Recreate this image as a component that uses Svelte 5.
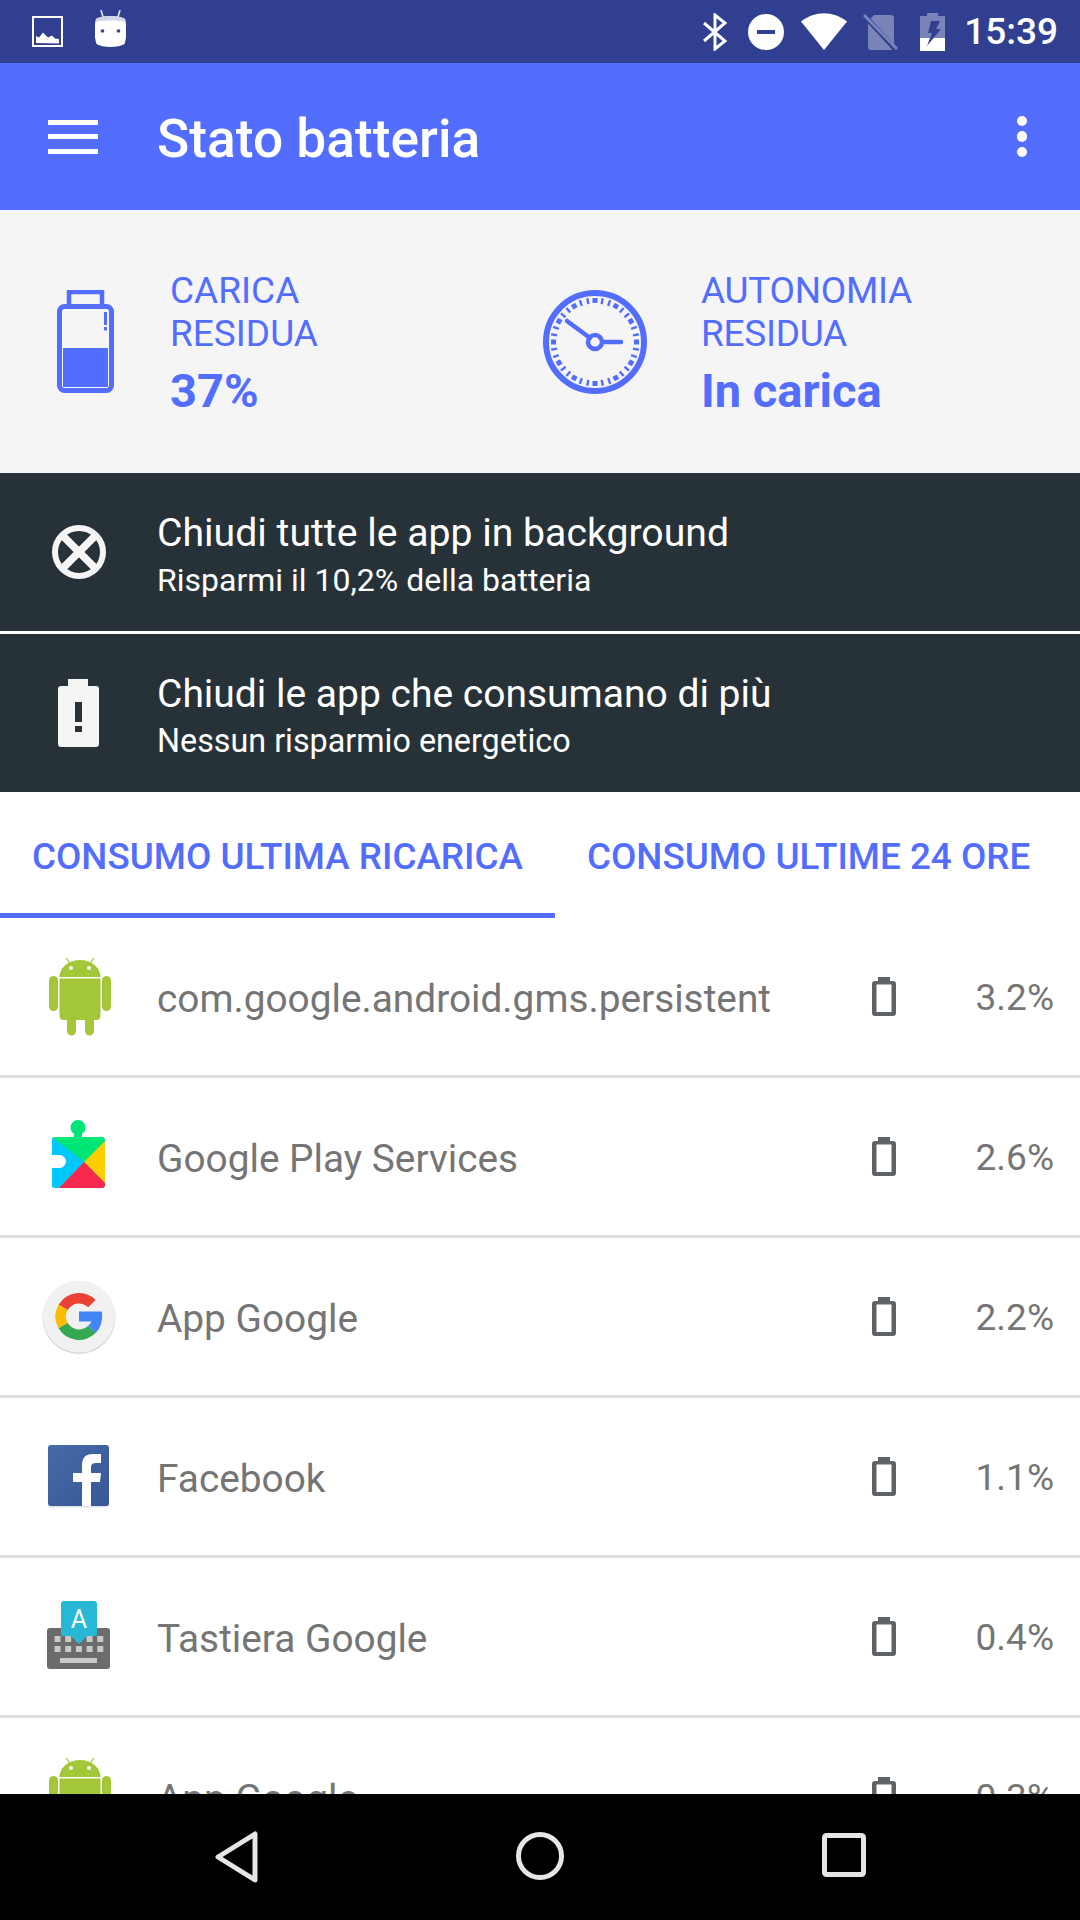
<script>
  const apps = [
    { name: 'com.google.android.gms.persistent', pct: '3.2%', icon: 'android' },
    { name: 'Google Play Services', pct: '2.6%', icon: 'play' },
    { name: 'App Google', pct: '2.2%', icon: 'google' },
    { name: 'Facebook', pct: '1.1%', icon: 'facebook' },
    { name: 'Tastiera Google', pct: '0.4%', icon: 'keyboard' },
    { name: 'App Google', pct: '0.3%', icon: 'android' }
  ];
  const ticks = Array.from({ length: 36 }, (_, i) => i * 10);
</script>

<div class="screen">
  <header class="status">
    <div class="status-left">
      <svg width="31" height="31" viewBox="0 0 31 31"><rect x="1" y="1" width="29" height="29" fill="none" stroke="#fff" stroke-width="2"/><path d="M4 27v-7l3 1.500 4-5 5 5 4-2 3 3 4 .5v4.500z" fill="#fff"/></svg>
      <svg class="robot" width="31" height="37" viewBox="0 0 31 37"><path d="M6 0l2 7M25 0l-2 7" stroke="#e4e6f2" stroke-width="1.600"/><path d="M1 9c6-4 23-4 29 0 2 8 2 17-.5 25-6 4-22 4-28 0C-1 26-1 17 1 9z" fill="#fff"/><path d="M1 9c6-4 23-4 29 0l.5 3c-7-2-23-2-30 0z" fill="#d2d6ea"/><circle cx="7.500" cy="21" r="1.800" fill="#303f8f"/><circle cx="23.500" cy="21" r="1.800" fill="#303f8f"/></svg>
    </div>
    <div class="status-right">
      <svg width="24" height="38" viewBox="0 0 24 38"><path d="M1 10l21 18-10 8V2l10 8L1 28" fill="none" stroke="#fff" stroke-width="3"/></svg>
      <svg class="s-dnd" width="36" height="36" viewBox="0 0 36 36"><circle cx="18" cy="18" r="18" fill="#fff"/><rect x="9" y="16" width="18" height="4" fill="#303f8f"/></svg>
      <svg class="s-wifi" width="46" height="37" viewBox="0 0 46 37"><path d="M0 8.500c14-11 32-11 46 0L23 37z" fill="#fff"/></svg>
      <svg class="s-sim" width="35" height="36" viewBox="0 0 35 36"><path d="M5 7l6-6h17q3 0 3 3v29q0 3-3 3H8q-3 0-3-3z" fill="#7a84b8"/><path d="M0 0l33 36" stroke="#303f8f" stroke-width="5"/><path d="M1 1l33 34" stroke="#7a84b8" stroke-width="3"/></svg>
      <svg class="s-bat" width="25" height="38" viewBox="0 0 25 38"><path d="M7 0h11v3h7v35H0V3h7z" fill="#7a84b8"/><rect y="25" width="25" height="13" fill="#fff"/><path d="M11 8h9l-4 8h5L7 33l5-13H8z" fill="#303f8f"/></svg>
      <span class="clock">15:39</span>
    </div>
  </header>

  <div class="appbar">
    <div class="menu"><i></i><i></i><i></i></div>
    <h1>Stato batteria</h1>
    <div class="more"><i></i><i></i><i></i></div>
  </div>

  <section class="summary">
    <div class="stat stat-a">
      <svg class="stat-icon" width="57" height="103" viewBox="0 0 57 103">
        <path d="M12 15V2h33v13" fill="none" stroke="#536dfe" stroke-width="4.500"/>
        <rect x="2.500" y="16.500" width="52" height="84" rx="5" fill="none" stroke="#536dfe" stroke-width="5"/>
        <rect x="6" y="58" width="45" height="39" fill="#536dfe"/>
        <rect x="47" y="22" width="3" height="13" fill="#536dfe"/>
        <rect x="47" y="37" width="3" height="3.500" fill="#536dfe"/>
      </svg>
      <div class="stat-text">
        <div class="label">CARICA<br />RESIDUA</div>
        <div class="value">37%</div>
      </div>
    </div>
    <div class="stat stat-b">
      <svg class="stat-icon" width="104" height="104" viewBox="0 0 104 104">
        <circle cx="52" cy="52" r="49" fill="none" stroke="#536dfe" stroke-width="6"/>
        {#each ticks as a}
          {#if a % 30 === 0}
            <rect x="49.500" y="8" width="5" height="5" fill="#536dfe" transform="rotate({a} 52 52)" />
          {:else}
            <rect x="50.800" y="7.500" width="2.400" height="6" fill="#536dfe" transform="rotate({a} 52 52)" />
          {/if}
        {/each}
        <path d="M47 48L24 31M60 52h18" stroke="#536dfe" stroke-width="4.500" stroke-linecap="round" />
        <circle cx="52" cy="52" r="7" fill="none" stroke="#536dfe" stroke-width="4.500"/>
      </svg>
      <div class="stat-text">
        <div class="label">AUTONOMIA<br />RESIDUA</div>
        <div class="value">In carica</div>
      </div>
    </div>
  </section>

  <div class="action first">
    <div class="action-slot">
      <svg width="54" height="54" viewBox="0 0 54 54"><circle cx="27" cy="27" r="24" fill="none" stroke="#f5f5f5" stroke-width="6"/><path d="M10 10l34 34M44 10L10 44" stroke="#f5f5f5" stroke-width="7.500"/></svg>
    </div>
    <div class="action-text">
      <div class="a-title">Chiudi tutte le app in background</div>
      <div class="a-sub">Risparmi il 10,2% della batteria</div>
    </div>
  </div>
  <div class="action second">
    <div class="action-slot">
      <svg width="41" height="68" viewBox="0 0 41 68"><path d="M10 0h20v7h8q3 0 3 3v55q0 3-3 3H3q-3 0-3-3V10q0-3 3-3h7z" fill="#f5f5f5"/><rect x="17" y="23" width="7" height="20" fill="#263238"/><rect x="17" y="47" width="7" height="6" fill="#263238"/></svg>
    </div>
    <div class="action-text">
      <div class="a-title">Chiudi le app che consumano di più</div>
      <div class="a-sub">Nessun risparmio energetico</div>
    </div>
  </div>

  <nav class="tabs">
    <div class="tab active">CONSUMO ULTIMA RICARICA</div>
    <div class="tab">CONSUMO ULTIME 24 ORE</div>
  </nav>

  <main class="list">
    {#each apps as app}
      <div class="row">
        <div class="icon-slot">
          {#if app.icon === 'android'}
            <svg class="droid" width="62" height="78" viewBox="0 0 62 78"><path d="M17 0l3.500 5M45 0l-3.500 5" stroke="#a4c639" stroke-width="1.200"/><path d="M10.500 19a20.500 17 0 0 1 41 0z" fill="#a4c639"/><circle cx="22" cy="10" r="2" fill="#fff"/><circle cx="40" cy="10" r="2" fill="#fff"/><path d="M10.500 20.500h41V58q0 4-4 4H45v11a4.500 4.500 0 0 1-9 0V62h-9v11a4.500 4.500 0 0 1-9 0V62h-3.500q-4 0-4-4z" fill="#a4c639"/><rect x="0" y="18" width="9" height="35" rx="4.500" fill="#a4c639"/><rect x="53" y="18" width="9" height="35" rx="4.500" fill="#a4c639"/></svg>
          {:else if app.icon === 'play'}
            <svg class="play" width="53" height="68" viewBox="0 0 53 68"><defs><clipPath id="pz"><rect y="17" width="53" height="51" rx="3"/><circle cx="26" cy="7.500" r="7.500"/><rect x="22" y="8" width="8" height="10"/></clipPath></defs><g clip-path="url(#pz)"><rect width="53" height="68" fill="#00e676"/><path d="M0 17l32 25-25 26H0z" fill="#00c8ff"/><path d="M53 21v42L32 42z" fill="#ffce00"/><path d="M32 42l21 21v5H7z" fill="#f7284e"/></g><path d="M0 35h7.500a6.500 6.500 0 0 1 0 13H0z" fill="#fff"/></svg>
          {:else if app.icon === 'google'}
            <svg width="74" height="74" viewBox="0 0 74 74"><circle cx="37" cy="37.500" r="36.500" fill="#d8d8d8"/><circle cx="37" cy="36.500" r="36" fill="#f1f1f1"/><path d="M53.600 19.900A23.500 23.500 0 0 0 16.600 24.750L25.700 30A13 13 0 0 1 46.200 27.300z" fill="#ea4335"/><path d="M16.600 24.750A23.500 23.500 0 0 0 16.600 48.250L25.700 43A13 13 0 0 1 25.700 30z" fill="#fbbc05"/><path d="M16.600 48.250A23.500 23.500 0 0 0 53.600 53.100L46.200 45.700A13 13 0 0 1 25.700 43z" fill="#34a853"/><path d="M37 31.500H60Q61.500 45 53.600 53.100L46.200 45.700Q48.500 43.500 49.500 41.500H37z" fill="#4285f4"/></svg>
          {:else if app.icon === 'facebook'}
            <svg width="61" height="63" viewBox="0 0 61 63"><defs><linearGradient id="fb" x1="0" y1="0" x2="1" y2="1"><stop offset="0" stop-color="#476aa8"/><stop offset="1" stop-color="#385796"/></linearGradient></defs><rect y="1.500" width="61" height="61" rx="3" fill="#dfe3ec"/><rect width="61" height="61" rx="3" fill="url(#fb)"/><path d="M34 61V37h-9V28h9v-8q0-11 11-11h8v9h-5q-5 0-5 4v6h10l-1 9h-9v24z" fill="#fff"/></svg>
          {:else}
            <svg class="kbd" width="63" height="68" viewBox="0 0 63 68"><rect y="27" width="63" height="41" rx="3" fill="#6b6b6b"/><g fill="#c9c9c9">{#each [0,1,2,3,4] as c}<rect x="{7.500 + c * 10.700}" y="35" width="6" height="6"/><rect x="{7.500 + c * 10.700}" y="45" width="6" height="6"/>{/each}<rect x="13" y="57" width="37" height="5"/></g><path d="M14 3q0-3 3-3h30q3 0 3 3v30q0 2-3 2h-7l-8 8-8-8h-7q-3 0-3-2z" fill="#26b8d4"/><text x="32" y="27" text-anchor="middle" class="key-a">A</text></svg>
          {/if}
        </div>
        <div class="app-name">{app.name}</div>
        <svg class="bat" width="24" height="39" viewBox="0 0 24 39"><path d="M6 0h12v4h3q3 0 3 3v29q0 3-3 3H3q-3 0-3-3V7q0-3 3-3h3z" fill="#5f6368"/><rect x="4.500" y="7.500" width="15" height="27.500" fill="#fff"/></svg>
        <div class="pct">{app.pct}</div>
      </div>
    {/each}
  </main>

  <footer class="navbar">
    <svg class="nav-back" width="46" height="52" viewBox="0 0 46 52"><path d="M41 3v46L4 26z" fill="none" stroke="#e6e6e6" stroke-width="5" stroke-linejoin="round"/></svg>
    <svg class="nav-home" width="48" height="48" viewBox="0 0 48 48"><circle cx="24" cy="24" r="21.500" fill="none" stroke="#e6e6e6" stroke-width="5"/></svg>
    <svg class="nav-recent" width="44" height="44" viewBox="0 0 44 44"><rect x="2.500" y="2.500" width="39" height="39" rx="2" fill="none" stroke="#e6e6e6" stroke-width="5"/></svg>
  </footer>
</div>

<style>
  :global(body) { margin: 0; background: #000; }
  .screen {
    width: 1080px; height: 1920px; overflow: hidden;
    background: #fff; font-family: Roboto, sans-serif;
    display: flex; flex-direction: column;
  }
  .status {
    height: 63px; flex: none; background: #303f8f; color: #fff;
    display: flex; justify-content: space-between; align-items: center; padding: 0 22px 0 32px;
  }
  .status-left { display: flex; align-items: center; gap: 32px; }
  .status-left svg { display: block; }
  .robot { margin-top: -6px; }
  .status-right { display: flex; align-items: center; }
  .status-right svg { display: block; }
  .s-dnd { margin-left: 21px; }
  .s-wifi { margin-left: 17px; }
  .s-sim { margin-left: 16px; }
  .s-bat { margin-left: 22px; }
  .clock { font-size: 37px; font-weight: 500; margin-left: 19px; }

  .appbar {
    height: 147px; flex: none; background: #536dfe; color: #fff;
    display: flex; align-items: center; padding: 0 48px;
  }
  .menu { width: 50px; display: flex; flex-direction: column; gap: 9.500px; margin-right: 59px; }
  .menu i { display: block; height: 5px; background: #fff; }
  h1 { margin: 0; padding-top: 6px; font-size: 53.300px; font-weight: 500; flex: 1; line-height: 1; }
  .more { display: flex; flex-direction: column; gap: 5px; margin-right: 5px; }
  .more i { display: block; width: 10.500px; height: 10.500px; border-radius: 50%; background: #fff; }

  .summary {
    height: 263px; flex: none; background: #f5f5f5; color: #536dfe;
    display: flex; box-sizing: border-box; padding-top: 59px;
  }
  .stat { display: flex; align-items: flex-start; }
  .stat-a { width: 530px; padding-left: 57px; box-sizing: border-box; }
  .stat-b { flex: 1; padding-left: 13px; }
  .stat-icon { display: block; margin-top: 21px; flex: none; }
  .stat-a .stat-text { margin-left: 56px; }
  .stat-b .stat-text { margin-left: 54px; }
  .stat-b .label { letter-spacing: -0.3px; }
  .label { font-size: 37px; line-height: 43px; }
  .value { font-size: 47px; font-weight: 700; line-height: 50px; margin-top: 11px; }

  .action {
    flex: none; box-sizing: border-box; background: #263238; color: #fff;
    display: flex; align-items: center;
  }
  .action.first { height: 161px; border-bottom: 3px solid #fff; }
  .action.second { height: 158px; }
  .action-slot { width: 157px; flex: none; display: flex; justify-content: center; }
  .action-slot svg { display: block; }
  .action-text { padding-top: 5px; }
  .a-title { font-size: 39.200px; line-height: 50px; }
  .a-sub { font-size: 32px; line-height: 44px; }
  .second .a-title { font-size: 39px; }
  .second .a-sub { font-size: 32.300px; }

  .tabs { height: 126px; flex: none; display: flex; color: #536dfe; font-size: 36.800px; font-weight: 500; }
  .tab { height: 126px; box-sizing: border-box; display: flex; align-items: center; padding-top: 2px; }
  .tab.active { width: 555px; padding-left: 32px; border-bottom: 5px solid #536dfe; padding-top: 7px; }
  .tab:not(.active) { margin-left: 32px; }

  .list { flex: 1; min-height: 0; overflow: hidden; }
  .row {
    height: 160px; box-sizing: border-box; border-bottom: 3px solid #e0e0e0;
    display: flex; align-items: center; color: #757575;
  }
  .icon-slot { width: 157px; display: flex; justify-content: center; flex: none; }
  .icon-slot svg { display: block; }
  .droid { margin-left: 3px; }
  .play { margin-top: -5px; }
  .kbd { margin-top: -3px; }
  .app-name { font-size: 38.800px; flex: 1; padding-top: 3px; }
  .bat { margin-right: 79px; display: block; flex: none; }
  .pct { font-size: 37px; width: 79px; margin-right: 26px; text-align: right; flex: none; padding-top: 1px; white-space: nowrap; }
  .key-a { font: 400 25px Roboto, sans-serif; fill: #fff; }

  .navbar {
    height: 126px; flex: none; background: #000;
    display: flex; align-items: flex-start;
  }
  .navbar svg { display: block; flex: none; }
  .nav-back { margin: 37px 0 0 214px; }
  .nav-home { margin: 38px 0 0 256px; }
  .nav-recent { margin: 39px 0 0 258px; }
</style>
